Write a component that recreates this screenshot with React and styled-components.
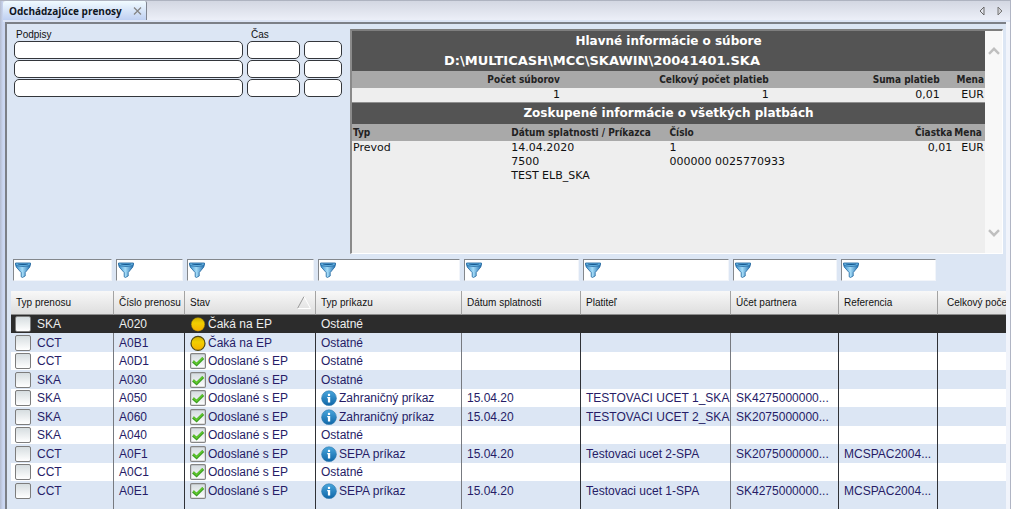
import React, { useState } from 'react';
import styled, { createGlobalStyle } from 'styled-components';

const columns = [
    { key: 'type', label: 'Typ prenosu', width: 103, soft: true },
    { key: 'number', label: 'Číslo prenosu', width: 71 },
    { key: 'status', label: 'Stav', width: 131, sorted: true },
    { key: 'order', label: 'Typ príkazu', width: 146, soft: true },
    { key: 'due', label: 'Dátum splatnosti', width: 119 },
    { key: 'payer', label: 'Platiteľ', width: 150, soft: true },
    { key: 'account', label: 'Účet partnera', width: 108 },
    { key: 'reference', label: 'Referencia', width: 99 },
]

const WAITING = 'Čaká na EP'
const SENT = 'Odoslané s EP'

const transfers = [
    { type: 'SKA', number: 'A020', status: WAITING, order: 'Ostatné' },
    { type: 'CCT', number: 'A0B1', status: WAITING, order: 'Ostatné' },
    { type: 'CCT', number: 'A0D1', status: SENT, order: 'Ostatné' },
    { type: 'SKA', number: 'A030', status: SENT, order: 'Ostatné' },
    { type: 'SKA', number: 'A050', status: SENT, order: 'Zahraničný príkaz', info: true, due: '15.04.20', payer: 'TESTOVACI UCET 1_SKA', account: 'SK4275000000...' },
    { type: 'SKA', number: 'A060', status: SENT, order: 'Zahraničný príkaz', info: true, due: '15.04.20', payer: 'TESTOVACI UCET 2_SKA', account: 'SK2075000000...' },
    { type: 'SKA', number: 'A040', status: SENT, order: 'Ostatné' },
    { type: 'CCT', number: 'A0F1', status: SENT, order: 'SEPA príkaz', info: true, due: '15.04.20', payer: 'Testovaci ucet 2-SPA', account: 'SK2075000000...', reference: 'MCSPAC2004...' },
    { type: 'CCT', number: 'A0C1', status: SENT, order: 'Ostatné' },
    { type: 'CCT', number: 'A0E1', status: SENT, order: 'SEPA príkaz', info: true, due: '15.04.20', payer: 'Testovaci ucet 1-SPA', account: 'SK4275000000...', reference: 'MCSPAC2004...' },
]

const FunnelIcon = () => (
    <svg width="16" height="16" viewBox="0 0 16 16" aria-hidden="true">
        <defs>
            <linearGradient id="funnel" x1="0" x2="1" y1="0" y2="0">
                <stop offset="0" stopColor="#2f86c6" />
                <stop offset="0.45" stopColor="#a5dcf8" />
                <stop offset="1" stopColor="#1d6cae" />
            </linearGradient>
        </defs>
        <path d="M0.4 1.4 H15.6 L14.8 5 L10.2 10.6 V14 L7.4 15.5 L6.2 14.8 V10.6 L1.2 5 Z" fill="url(#funnel)" stroke="#1f669f" strokeWidth="0.8" />
        <path d="M0.6 1 H15.4 L14.8 3.6 Q8 5.6 1.2 3.6 Z" fill="#6cbbe9" stroke="#1c5f98" strokeWidth="0.7" />
        <path d="M2.6 2 H13.4 Q8 3.8 2.6 2" fill="#175890" stroke="#175890" strokeWidth="0.4" />
    </svg>
)

const CoinIcon = ({ ring }) => (
    <svg width="16" height="16" viewBox="0 0 16 16" aria-hidden="true">
        <defs>
            <linearGradient id="coin" x1="0" x2="0" y1="0" y2="1">
                <stop offset="0" stopColor="#cfae00" />
                <stop offset="0.4" stopColor="#f2cf00" />
                <stop offset="1" stopColor="#f7b000" />
            </linearGradient>
        </defs>
        <circle cx="8" cy="8.4" r={ring ? 7 : 6.8} fill="url(#coin)" stroke={ring ? '#4e4614' : '#6b5a10'} strokeWidth={ring ? 1.2 : 0.4} />
    </svg>
)

const SentIcon = () => (
    <svg width="16" height="16" viewBox="0 0 16 16" aria-hidden="true">
        <defs>
            <linearGradient id="sent" x1="0" x2="0" y1="0" y2="1">
                <stop offset="0" stopColor="#d3dade" />
                <stop offset="1" stopColor="#ffffff" />
            </linearGradient>
        </defs>
        <rect x="0.6" y="0.6" width="14.8" height="14.8" rx="1.2" fill="url(#sent)" stroke="#858585" strokeWidth="1.2" />
        <path d="M3 8.4 L6.6 11.6 L13.2 5" fill="none" stroke="#3a9d20" strokeWidth="2.8" />
        <path d="M3.2 8 L6.6 11 L12.8 4.8" fill="none" stroke="#62c92c" strokeWidth="1.4" />
    </svg>
)

const InfoIcon = () => (
    <svg width="16" height="16" viewBox="0 0 16 16" aria-hidden="true">
        <defs>
            <linearGradient id="info" x1="0" x2="0" y1="0" y2="1">
                <stop offset="0" stopColor="#49a6dc" />
                <stop offset="1" stopColor="#0f66a8" />
            </linearGradient>
        </defs>
        <circle cx="8" cy="8.2" r="7.4" fill="url(#info)" stroke="#2b77ab" strokeWidth="0.6" />
        <rect x="6.9" y="3.8" width="2.2" height="2.2" rx="0.6" fill="#fff" />
        <path d="M6.2 7 H9.2 V12.4 H6.9 V8.2 H6.2 Z" fill="#fff" />
    </svg>
)

const Chevron = ({ down }) => (
    <svg width="12" height="8" viewBox="0 0 12 8" aria-hidden="true">
        <path d={down ? 'M1 1.2 L6 6.2 L11 1.2' : 'M1 6.8 L6 1.8 L11 6.8'} fill="none" stroke="#bfbfbf" strokeWidth="2.4" />
    </svg>
)

const Cell = ({ column, row }) => {
    if (column.key === 'status') {
        return (
            <CellContent>
                {row.status === WAITING ? <CoinIcon ring={row.number !== 'A020'} /> : <SentIcon />}
                {row.status}
            </CellContent>
        )
    }
    return (
        <CellContent>
            {column.key === 'order' && row.info && <InfoIcon />}
            {row[column.key]}
        </CellContent>
    )
}

export default function App() {
    const [selected, setSelected] = useState('A020')

    return (
        <Window>
            <GlobalStyle />
            <TabBar>
                <Tab>
                    <TabTitle>Odchádzajúce prenosy</TabTitle>
                    <IconButton aria-label="Zavrieť">
                        <svg width="9" height="8" viewBox="0 0 9 8"><path d="M1 0.5 L8 7.5 M8 0.5 L1 7.5" stroke="#858585" strokeWidth="1.3" /></svg>
                    </IconButton>
                </Tab>
                <TabArrows>
                    <IconButton aria-label="Predchádzajúca">
                        <svg width="6" height="10" viewBox="0 0 6 10"><path d="M5 1 L1 5 L5 9 Z" fill="#e4e6ee" stroke="#666" /></svg>
                    </IconButton>
                    <IconButton aria-label="Nasledujúca">
                        <svg width="6" height="10" viewBox="0 0 6 10"><path d="M1 1 L5 5 L1 9 Z" fill="#d0d0d4" stroke="#777" /></svg>
                    </IconButton>
                </TabArrows>
            </TabBar>

            <Panel>
                <Top>
                    <Signatures>
                        <FieldLabel htmlFor="sign0">Podpisy</FieldLabel>
                        <TimeLabel htmlFor="time0">Čas</TimeLabel>
                        {[0, 1, 2].map((i) => (
                            <SignatureRow key={i}>
                                <SignatureInput id={'sign' + i} aria-label={'Podpisy ' + (i + 1)} />
                                <SignatureInput id={'time' + i} aria-label={'Čas ' + (i + 1)} />
                                <SignatureInput aria-label={'Čas ' + (i + 1) + ' b'} />
                            </SignatureRow>
                        ))}
                    </Signatures>

                    <Summary>
                        <SummaryBody>
                            <SummaryTitle>
                                Hlavné informácie o súbore
                                <FilePath>D:\MULTICASH\MCC\SKAWIN\20041401.SKA</FilePath>
                            </SummaryTitle>
                            <SummaryTable>
                                <colgroup>
                                    <col width="33%" /><col width="33%" /><col width="27%" /><col width="7%" />
                                </colgroup>
                                <thead>
                                    <tr>
                                        <SummaryTh $right>Počet súborov</SummaryTh>
                                        <SummaryTh $right>Celkový počet platieb</SummaryTh>
                                        <SummaryTh $right>Suma platieb</SummaryTh>
                                        <SummaryTh $right>Mena</SummaryTh>
                                    </tr>
                                </thead>
                                <tbody>
                                    <tr>
                                        <SummaryTd $right>1</SummaryTd>
                                        <SummaryTd $right>1</SummaryTd>
                                        <SummaryTd $right>0,01</SummaryTd>
                                        <SummaryTd $right>EUR</SummaryTd>
                                    </tr>
                                </tbody>
                            </SummaryTable>
                            <SummaryTitle $line>Zoskupené informácie o všetkých platbách</SummaryTitle>
                            <SummaryTable>
                                <colgroup>
                                    <col width="25%" /><col width="25%" /><col width="45%" /><col width="5%" />
                                </colgroup>
                                <thead>
                                    <tr>
                                        <SummaryTh>Typ</SummaryTh>
                                        <SummaryTh>Dátum splatnosti / Príkazca</SummaryTh>
                                        <SummaryTh><Split><span>Číslo</span><span>Čiastka</span></Split></SummaryTh>
                                        <SummaryTh>Mena</SummaryTh>
                                    </tr>
                                </thead>
                                <tbody>
                                    <tr>
                                        <SummaryTd>Prevod</SummaryTd>
                                        <SummaryTd>14.04.2020<br />7500<br />TEST ELB_SKA</SummaryTd>
                                        <SummaryTd><Split><span>1<br />000000 0025770933</span><span>0,01</span></Split></SummaryTd>
                                        <SummaryTd $right>EUR</SummaryTd>
                                    </tr>
                                </tbody>
                            </SummaryTable>
                        </SummaryBody>
                        <ScrollBar>
                            <IconButton aria-label="Hore"><Chevron /></IconButton>
                            <IconButton aria-label="Dole"><Chevron down /></IconButton>
                        </ScrollBar>
                    </Summary>
                </Top>

                <Filters>
                    {columns.map((column) => (
                        <Filter key={column.key}>
                            <FunnelIcon />
                            <FilterInput aria-label={column.label} />
                        </Filter>
                    ))}
                </Filters>

                <TableArea>
                    <Table>
                        <colgroup>
                            {columns.map((column) => <col key={column.key} width={column.width} />)}
                            <col />
                        </colgroup>
                        <thead>
                            <tr>
                                {columns.map((column) => (
                                    <Th key={column.key}>
                                        <HeadContent>
                                            {column.label}
                                            {column.sorted && (
                                                <svg width="14" height="13" viewBox="0 0 14 13" aria-hidden="true">
                                                    <path d="M0.5 12.5 L7 0.5" stroke="#999" />
                                                    <path d="M7 0.5 L13.5 12.5 H0.5" fill="none" stroke="#fff" />
                                                </svg>
                                            )}
                                        </HeadContent>
                                    </Th>
                                ))}
                                <Th $last>Celkový poče</Th>
                            </tr>
                        </thead>
                        <tbody>
                            {transfers.map((row) => (
                                <Row key={row.number} $selected={row.number === selected} onClick={() => setSelected(row.number)}>
                                    {columns.map((column) => (
                                        <Td key={column.key} $soft={column.soft} $first={column.key === 'type'}>
                                            {column.key === 'type'
                                                ? <CheckLabel><CheckBox type="checkbox" />{row.type}</CheckLabel>
                                                : <Cell column={column} row={row} />}
                                        </Td>
                                    ))}
                                    <Td $last />
                                </Row>
                            ))}
                            <FillRow>
                                {columns.map((column) => <Td key={column.key} $soft={column.soft} />)}
                                <Td $last />
                            </FillRow>
                        </tbody>
                    </Table>
                </TableArea>
            </Panel>
        </Window>
    )
}


const GlobalStyle = createGlobalStyle`
    * {
        box-sizing: border-box;
    }

    body {
        margin: 0;
        font-family: "Liberation Sans", Arial, sans-serif;
        font-size: 12px;
    }
`

const Window = styled.div`
    height: 100vh;
    display: flex;
    flex-direction: column;
    overflow: hidden;
    padding: 0 4px 0 3px;
    border-top: 1px solid #aeb3c0;
    border-right: 1px solid #b0b5c4;
    background: linear-gradient(90deg, #b4bccf 0, #cbd7f2 3px, #cbd7f2 50%, #f1f4fb 50%);
`

const TabBar = styled.div`
    display: flex;
    justify-content: space-between;
    height: 21px;
    flex: none;
    margin-right: -4px;
    border-bottom: 2px solid #dde5f5;
    background: linear-gradient(#d3d7e2, #eceff8);
`

const Tab = styled.div`
    display: flex;
    align-items: center;
    gap: 11px;
    padding: 0 4px 0 6px;
    border-right: 1px solid #808590;
    border-radius: 3px 2px 0 0;
    background: linear-gradient(#f1fbff, #bfd0f2);
`

const TabTitle = styled.span`
    font-family: "Open Sans", "Noto Sans", sans-serif;
    font-size: 10px;
    font-weight: bold;
    color: #10161f;
`

const TabArrows = styled.div`
    display: flex;
    align-items: center;
    gap: 12px;
    padding-right: 7px;
`

const IconButton = styled.button`
    display: flex;
    padding: 0;
    border: none;
    background: none;
`

const Panel = styled.main`
    flex: 1;
    min-height: 0;
    display: flex;
    flex-direction: column;
    margin-left: 2px;
    padding-left: 4px;
    border: solid #7c8087;
    border-width: 2px 0 0 2px;
    background-color: #dce6f4;
`

const Top = styled.div`
    display: flex;
    gap: 8px;
    padding: 5px 3px 0;
`

const Signatures = styled.div`
    width: 328px;
    flex: none;
    display: grid;
    grid-template-columns: 234px 1fr;
    align-content: start;
    gap: 1px 0;
    font-size: 10px;
    line-height: 11px;
`

const FieldLabel = styled.label`
    padding-left: 2px;
    color: #111;
`

const TimeLabel = styled(FieldLabel)`
    padding-left: 3px;
`

const SignatureRow = styled.div`
    grid-column: 1 / -1;
    display: grid;
    grid-template-columns: 229px 53px 38px;
    justify-content: space-between;
`

const SignatureInput = styled.input`
    min-width: 0;
    width: 100%;
    height: 18px;
    padding: 0 4px;
    border: 1px solid #33363b;
    border-radius: 5px;
    background-color: white;
    font-size: 10px;
`

const Summary = styled.section`
    flex: 1;
    height: 225px;
    display: flex;
    border: 1px solid #fff;
    border-top: 2px solid #7e7e7e;
    border-left: 2px solid #8a8a8a;
    background-color: #eee;
`

const SummaryBody = styled.div`
    flex: 1;
    font-family: "DejaVu Sans", Verdana, sans-serif;
`

const SummaryTitle = styled.h2`
    margin: 0;
    padding: 1px 0;
    border-top: ${props => props.$line ? '1px solid #8f8f8f' : 'none'};
    background-color: #545454;
    color: white;
    font-size: 12px;
    line-height: 19px;
    text-align: center;
`

const FilePath = styled.div`
    padding-right: 21%;
    font-size: 13px;
`

const SummaryTable = styled.table`
    width: 100%;
    table-layout: fixed;
    border-collapse: collapse;
`

const SummaryTh = styled.th`
    padding: 1px 1px 0;
    background-color: #a9a9a9;
    color: #222;
    font-family: "DejaVu Sans Condensed", Tahoma, sans-serif;
    font-size: 10px;
    line-height: 16px;
    white-space: nowrap;
    text-align: ${props => props.$right ? 'right' : 'left'};
`

const SummaryTd = styled.td`
    padding: 0 1px;
    color: #111;
    font-size: 11px;
    line-height: 14px;
    vertical-align: top;
    white-space: nowrap;
    text-align: ${props => props.$right ? 'right' : 'left'};
`

const Split = styled.div`
    display: flex;
    justify-content: space-between;
`

const ScrollBar = styled.div`
    width: 17px;
    display: flex;
    flex-direction: column;
    justify-content: space-between;
    align-items: center;
    padding: 16px 0;
    background-color: #f8f8f8;
`

const Filters = styled.div`
    display: grid;
    grid-template-columns: ${columns.map(c => c.width + 'px').join(' ')} 1fr;
    padding: 5px 0 10px;
`

const Filter = styled.div`
    display: flex;
    align-items: center;
    height: 22px;
    margin: 0 2px;
    padding-left: 1px;
    border: 1px solid #f2f5fa;
    border-top-color: #83878c;
    border-left-color: #83878c;
    background-color: white;
`

const FilterInput = styled.input`
    flex: 1;
    min-width: 0;
    border: none;
    outline: none;
    background: none;
`

const TableArea = styled.div`
    flex: 1;
    min-height: 0;
    overflow: hidden;
`

const Table = styled.table`
    width: 100%;
    height: 100%;
    table-layout: fixed;
    border-collapse: separate;
    border-spacing: 0;
`

const Th = styled.th`
    height: 24px;
    padding: 0 5px;
    padding-left: ${props => props.$last ? '9px' : '5px'};
    padding-right: ${props => props.$last ? '0' : '4px'};
    border-right: ${props => props.$last ? 'none' : '1px solid #a3a3a3'};
    border-bottom: 1px solid #8b8b8b;
    background: linear-gradient(#f8f8f8, #dedede);
    color: #111;
    font-size: 10px;
    font-weight: normal;
    text-align: left;
    white-space: nowrap;
    overflow: hidden;
`

const HeadContent = styled.div`
    display: flex;
    align-items: center;
    justify-content: space-between;
`

const Td = styled.td`
    padding: 0 0 0 ${props => props.$first ? '4px' : '5px'};
    border-right: ${props => props.$last ? 'none' : '1px solid'};
    border-color: ${props => props.$soft ? '#777a80' : '#2f3136'};
    white-space: nowrap;
    overflow: hidden;
`

const Row = styled.tr`
    height: 18px;
    line-height: 16px;
    color: #261c66;

    &:nth-child(even) {
        height: 19px;
    }

    &:nth-child(odd) td {
        background-color: white;
    }

    &:nth-child(even) td {
        background-color: #dce6f4;
    }

    &&& td {
        ${props => props.$selected && 'background-color: #2c2c2c; border-color: #2c2c2c; color: #eee;'}
    }
`

const FillRow = styled.tr`
    height: auto;
`

const CellContent = styled.div`
    display: flex;
    align-items: center;
    gap: 2px;
    height: 18px;
`

const CheckLabel = styled.label`
    display: flex;
    align-items: center;
    gap: 6px;
    height: 18px;
`

const CheckBox = styled.input`
    appearance: none;
    width: 16px;
    height: 16px;
    margin: 0;
    border: 1px solid #7d7d7d;
    border-radius: 2px;
    background: linear-gradient(#d6dde0, #fff);

    &:checked {
        background: #5cb82c;
    }
`
